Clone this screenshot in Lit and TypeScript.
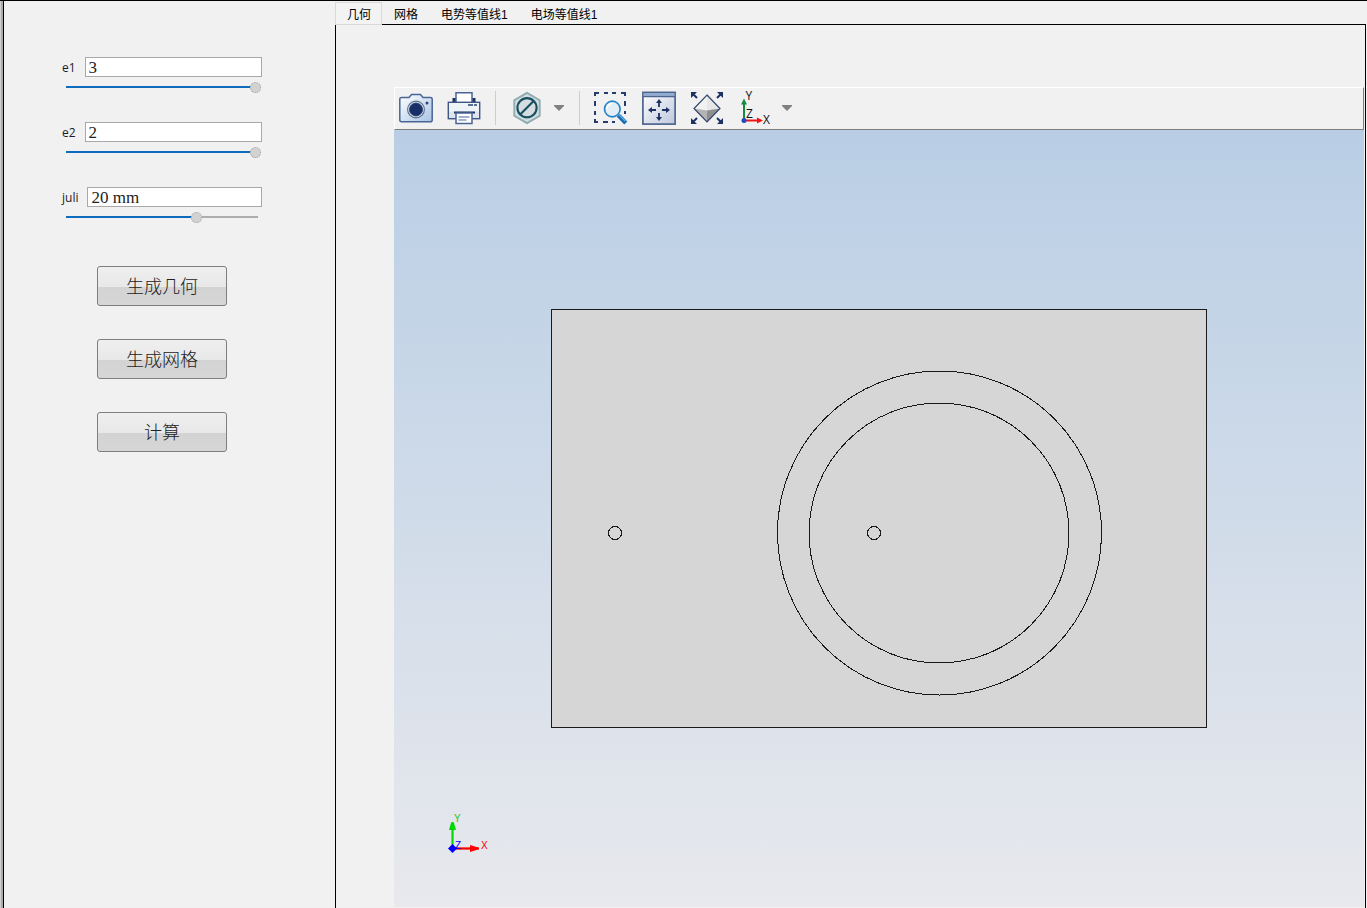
import { LitElement, html, css, svg } from "lit";
import { customElement, property, state } from "lit/decorators.js";
import { classMap } from "lit/directives/class-map.js";

interface Parameter {
  name: string;
  value: string;
  position: number;
}

const cameraIcon = svg`
  <defs>
    <linearGradient id="cam" x1="0" y1="0" x2="1" y2="1">
      <stop offset="0" stop-color="#ffffff"/><stop offset="1" stop-color="#a9c4e6"/>
    </linearGradient>
  </defs>
  <path d="M2.5 6.5H10L12.5 3.5H21.5L24 6.5H31.5Q33.2 6.5 33.2 8V29Q33.2 30.8 31.5 30.8H2.5Q.8 30.8 .8 29V8Q.8 6.5 2.5 6.5Z" fill="url(#cam)" stroke="#4a6496" stroke-width="1.5"/>
  <circle cx="17" cy="18.5" r="8.4" fill="#dfe9f5" stroke="#5d7089" stroke-width="1.2"/>
  <circle cx="17" cy="18.5" r="6.5" fill="#172f66" stroke="#2c4474" stroke-width="1"/>
  <circle cx="28" cy="12" r="1.5" fill="#2c477e"/>`;

const printerIcon = svg`
  <path d="M9 12V1.8H25V12" fill="#fff" stroke="#4a6496" stroke-width="1.5"/>
  <path d="M5.5 7H8.5V12H5.5ZM25.5 7H28.5V12H25.5Z" fill="#1d3263"/>
  <rect x="1.3" y="11.3" width="31.4" height="16.4" fill="#eef3f8" stroke="#3f5582" stroke-width="1.4"/>
  <path d="M2 20.5H32V27H2Z" fill="#dde5ef"/>
  <path d="M21 14H26M27 14H30" stroke="#2b426f" stroke-width="1.4"/>
  <path d="M7 21.5H28" stroke="#1d3263" stroke-width="2"/>
  <path d="M9 22H25V32.5H9Z" fill="#fff" stroke="#4a6496" stroke-width="1.5"/>
  <path d="M11.5 26H22.5M11.5 29H19.5" stroke="#4a6496" stroke-width="1.2"/>`;

const hexIcon = svg`
  <path d="M17 1.5L30 9V25L17 32.5L4 25V9Z" fill="#a7bdc1" stroke="#88a5aa" stroke-width="1.2"/>
  <path d="M17 4L28 10.2V23.8L17 30L6 23.8V10.2Z" fill="#c8d6d8" stroke="#e0e9ea" stroke-width="1"/>
  <circle cx="17" cy="16.7" r="9.6" fill="#d7dcde" stroke="#174f63" stroke-width="2.1"/>
  <path d="M10.4 23.3L23.6 10.1" stroke="#174f63" stroke-width="2.1"/>`;

const zoomBoxIcon = svg`
  <path d="M1 5V2H5M10 2H14M18 2H22M27 2H31V5M31 10V15M31 20V23M1 10V15M1 20V24M1 28V31H4M9 31H14M18 31H21" fill="none" stroke="#263c6d" stroke-width="2"/>
  <path d="M24.3 24.3L31.8 32" stroke="#1b6bae" stroke-width="4.2"/>
  <path d="M24.6 23.4L31.5 30.2" stroke="#5db4e8" stroke-width="1.2"/>
  <circle cx="18.3" cy="18" r="7.8" fill="#e4eef6" stroke="#2785c8" stroke-width="1.7"/>
  <path d="M12.8 18A5.5 5.5 0 0 1 18.3 12.5" fill="none" stroke="#fff" stroke-width="1.5"/>`;

const extentsIcon = svg`
  <defs>
    <linearGradient id="ext" x1="0" y1="0" x2="1" y2="1">
      <stop offset="0" stop-color="#ffffff"/><stop offset="1" stop-color="#bdc8dc"/>
    </linearGradient>
  </defs>
  <rect x=".9" y="1.4" width="32.2" height="31.7" fill="url(#ext)" stroke="#4d648f" stroke-width="1.7"/>
  <rect x="1.7" y="2" width="30.6" height="3" fill="#93abd0"/>
  <path d="M1 5.6H33" stroke="#4d648f" stroke-width="1.3"/>
  <path d="M17 16V11M17 22V27M14 19H9M20 19H25" stroke="#1d3263" stroke-width="1.8"/>
  <path d="M17 8L20 12H14ZM17 30L20 26H14ZM6 19L10 16V22ZM28 19L24 16V22Z" fill="#1d3263"/>`;

const diamondIcon = svg`
  <path d="M17 4L30 17.5L17 31L4 17.5Z" fill="#e6e6e6"/>
  <path d="M17 4L17 19.5L4 17.5Z" fill="#f1f1f1"/>
  <path d="M4 17.5L17 19.5V31Z" fill="#b4b4b4"/>
  <path d="M30 17.5L17 19.5V31Z" fill="#8f8f8f"/>
  <path d="M17 4L30 17.5L17 31L4 17.5Z" fill="none" stroke="#31466f" stroke-width="1.2"/>
  <path d="M3 3L7 7M31 3L27 7M3 31L7 27M31 31L27 27" stroke="#1d3263" stroke-width="2"/>
  <path d="M1 1H7L1 7ZM33 1H27L33 7ZM1 33H7L1 27ZM33 33H27L33 27Z" fill="#1d3263"/>`;

const axesIcon = svg`
  <path d="M6 29V12" stroke="#158a43" stroke-width="2"/>
  <path d="M6 7.5L9 13.5H3Z" fill="#158a43"/>
  <path d="M6 29.5H20" stroke="#ee1515" stroke-width="2"/>
  <path d="M25 29.5L19 26.5V32.5Z" fill="#ee1515"/>
  <circle cx="6" cy="29.5" r="2.5" fill="#2049bd"/>
  <text class="glyph" x="7.5" y="8.5">Y</text>
  <text class="glyph" x="8" y="27">Z</text>
  <text class="glyph" x="25" y="33">X</text>`;

@customElement("param-field")
export class ParamField extends LitElement {
  @property() name = "";
  @property() value = "";
  @property({ type: Number }) position = 0;

  static styles = css`
    :host { display: block; }
    .line { display: flex; align-items: center; gap: 9px; height: 20px; }
    .label { font: 12px/22px "Open Sans", "Noto Sans", sans-serif; color: #1c1c28; padding-top: 1px; }
    .entry {
      flex: 1;
      min-width: 0;
      box-sizing: border-box;
      height: 20px;
      margin: 0;
      padding: 2px 3px 0;
      border: 1px solid #a9a9a9;
      border-radius: 0;
      background: #fff;
      color: #222;
      font: 17px/17px "Liberation Serif", serif;
      outline: none;
    }
    .slider {
      display: block;
      appearance: none;
      width: calc(100% - 5px);
      height: 10px;
      margin: 5px 1px 0 4px;
      background: linear-gradient(to right, #0f6cbd var(--fill), #adadad var(--fill))
        left center / calc(100% - 3px) 2px no-repeat;
      outline: none;
    }
    .slider::-webkit-slider-thumb {
      appearance: none;
      box-sizing: border-box;
      width: 11px;
      height: 11px;
      border: 1px dotted #a3a3a3;
      border-radius: 50%;
      background: #d2d2d2;
    }
  `;

  private onSlide(e: Event) {
    this.position = Number((e.target as HTMLInputElement).value);
  }

  render() {
    return html`
      <div class="line">
        <label class="label" for="entry">${this.name}</label>
        <input class="entry" id="entry" type="text" .value=${this.value} />
      </div>
      <input
        class="slider"
        type="range"
        min="0"
        max="100"
        aria-label=${this.name}
        style="--fill: ${this.position}%"
        .value=${String(this.position)}
        @input=${this.onSlide}
      />
    `;
  }
}

@customElement("graphics-view")
export class GraphicsView extends LitElement {
  static styles = css`
    :host { display: flex; flex-direction: column; flex: 1; min-height: 0; }
    .toolbar {
      display: flex;
      align-items: center;
      gap: 14px;
      height: 40px;
      padding: 0 0 1px 4px;
      border: 1px solid;
      border-color: #fff #7d7d7d #7d7d7d #fff;
      background: #f1f1f1;
    }
    .tool, .arrow { display: block; padding: 0; border: 0; background: none; height: 34px; }
    .tool { width: 34px; }
    .arrow { width: 11px; }
    .icon { display: block; overflow: visible; }
    .split { display: flex; gap: 10px; }
    .sep { width: 1px; height: 34px; background: #cdcdcd; }
    .glyph { font: 12px "Open Sans", "Noto Sans", sans-serif; fill: #111; }
    .canvas {
      position: relative;
      flex: 1;
      min-height: 0;
      overflow: hidden;
      background: linear-gradient(#b9cee5, #e8e9ed);
    }
    .drawing { display: block; width: 100%; height: 100%; }
    .shape { fill: none; stroke: #1a1a1a; stroke-width: 1; shape-rendering: crispEdges; }
    .plate { fill: #d6d6d6; }
    .triad { position: absolute; left: 50px; bottom: 50px; }
    .mark { font: 10px "Liberation Sans", sans-serif; }
    .red { fill: #f00; }
    .green { fill: #18c828; }
    .blue { fill: #00f; }
  `;

  private tool(label: string, icon: unknown) {
    return html`<button class="tool" type="button" aria-label=${label}>
      <svg class="icon" width="34" height="34" viewBox="0 0 34 34">${icon}</svg>
    </button>`;
  }

  private arrow(label: string) {
    return html`<button class="arrow" type="button" aria-label=${label}>
      <svg class="icon" width="11" height="34" viewBox="0 0 11 34">
        <path d="M0 14H10V15L5 20L0 15Z" fill="#808080" />
      </svg>
    </button>`;
  }

  render() {
    return html`
      <div class="toolbar" role="toolbar">
        ${this.tool("图像快照", cameraIcon)} ${this.tool("打印", printerIcon)}
        <span class="sep"></span>
        <div class="split">${this.tool("选择", hexIcon)} ${this.arrow("选择菜单")}</div>
        <span class="sep"></span>
        ${this.tool("缩放框", zoomBoxIcon)} ${this.tool("缩放到窗口大小", extentsIcon)}
        ${this.tool("缩放到选定对象", diamondIcon)}
        <div class="split">${this.tool("视图", axesIcon)} ${this.arrow("视图菜单")}</div>
      </div>
      <div class="canvas">
        <svg class="drawing" viewBox="0 0 970 777">
          <rect class="shape plate" x="157.5" y="179.5" width="655" height="418" />
          <circle class="shape" cx="545.5" cy="403" r="162" />
          <circle class="shape" cx="545" cy="403" r="130" />
          <circle class="shape" cx="221" cy="403" r="6.5" />
          <circle class="shape" cx="480" cy="403" r="6.5" />
        </svg>
        <svg class="triad" width="50" height="44" viewBox="0 0 50 44">
          <path d="M8.5 36V9" stroke="#5fdc68" stroke-width="3" />
          <path d="M8.5 36V9" stroke="#00d800" stroke-width="1" />
          <path d="M7 10H10L12 17H5Z" fill="#00d800" />
          <path d="M9 35.5H35" stroke="#f26a6a" stroke-width="3" />
          <path d="M9 35.5H35" stroke="#f00" stroke-width="1.4" />
          <path d="M26 32L34 34.5V36.5L26 39Z" fill="#f00" />
          <path d="M8.5 31L13 35.5L8.5 40L4 35.5Z" fill="#00f" />
          <text class="mark green" x="10" y="9">Y</text>
          <text class="mark blue" x="11" y="36">Z</text>
          <text class="mark red" x="37" y="36">X</text>
        </svg>
      </div>
    `;
  }
}

@customElement("app-root")
export class AppRoot extends LitElement {
  @state() private active = 0;

  private tabs = ["几何", "网格", "电势等值线1", "电场等值线1"];
  private actions = ["生成几何", "生成网格", "计算"];
  private params: Parameter[] = [
    { name: "e1", value: "3", position: 100 },
    { name: "e2", value: "2", position: 100 },
    { name: "juli", value: "20 mm", position: 68 },
  ];

  static styles = css`
    :host { display: block; height: 100vh; background: #f1f1f1; }
    .frame {
      display: flex;
      box-sizing: border-box;
      height: 100%;
      border-top: 1px solid #000;
      background: #f1f1f1;
    }
    .edge { flex: none; width: 2px; border-left: 1px solid #d0d0d0; border-right: 1px solid #000; background: #ababab; }
    .side {
      flex: none;
      display: flex;
      flex-direction: column;
      box-sizing: border-box;
      width: 331px;
      padding: 56px 73px 0 58px;
    }
    .fields { display: flex; flex-direction: column; gap: 30px; }
    .actions { display: flex; flex-direction: column; align-items: center; gap: 33px; margin-top: 44px; }
    .action {
      box-sizing: border-box;
      width: 130px;
      height: 40px;
      padding: 0 0 2px;
      border: 1px solid #7e7e7e;
      border-radius: 3px;
      background: linear-gradient(#efefef, #e8e8e8 52%, #d3d3d3 52%, #d6d6d6);
      color: #222;
      font: 300 18px/24px "Noto Sans CJK SC", sans-serif;
    }
    .main { flex: 1; min-width: 0; display: flex; flex-direction: column; margin-right: 1px; }
    .tabs {
      display: flex;
      box-sizing: border-box;
      height: 24px;
      padding-top: 1px;
      border-bottom: 1px solid #000;
    }
    .tab {
      box-sizing: border-box;
      height: 23px;
      padding: 3px 10px 0 11px;
      border: 1px solid transparent;
      background: none;
      color: #000;
      font: 12px/18px "Liberation Sans", "Noto Sans CJK SC", sans-serif;
    }
    .current { background: #f3f3f3; border-color: #d9d9d9; }
    .panel {
      flex: 1;
      min-height: 0;
      display: flex;
      flex-direction: column;
      padding: 62px 1px 1px 58px;
      border-left: 1px solid #000;
      border-right: 1px solid #000;
    }
  `;

  render() {
    return html`
      <div class="frame">
        <div class="edge"></div>
        <aside class="side">
          <div class="fields">
            ${this.params.map(
              (p) => html`<param-field .name=${p.name} .value=${p.value} .position=${p.position}></param-field>`
            )}
          </div>
          <div class="actions">
            ${this.actions.map((a) => html`<button class="action" type="button">${a}</button>`)}
          </div>
        </aside>
        <main class="main">
          <div class="tabs" role="tablist">
            ${this.tabs.map(
              (t, i) => html`<button
                type="button"
                role="tab"
                aria-selected=${i === this.active ? "true" : "false"}
                class=${classMap({ tab: true, current: i === this.active })}
                @click=${() => (this.active = i)}
              >${t}</button>`
            )}
          </div>
          <div class="panel"><graphics-view></graphics-view></div>
        </main>
      </div>
    `;
  }
}
